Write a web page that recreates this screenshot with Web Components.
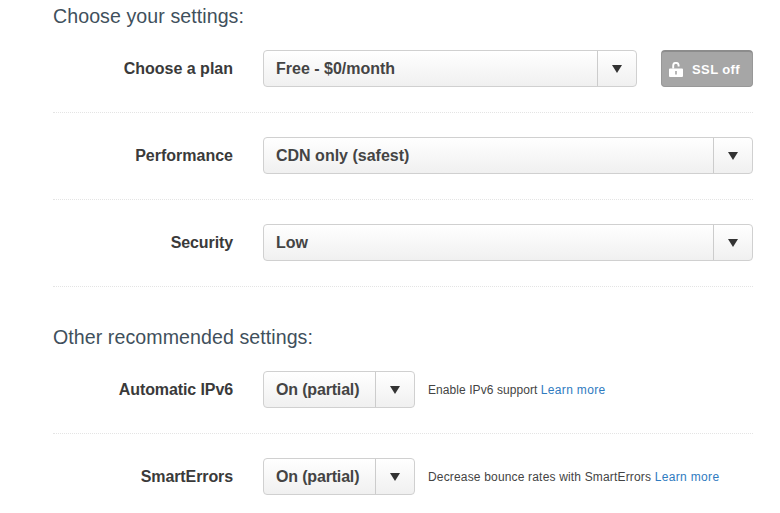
<!DOCTYPE html>
<html>
<head>
<meta charset="utf-8">
<style>
  html, body { margin: 0; background: #fff; }
  body { font-family: "Liberation Sans", Arial, sans-serif; color: #333; }
</style>
</head>
<body>
<settings-page>
  <settings-section heading="Choose your settings:" class="first">
    <setting-row label="Choose a plan">
      <drop-select value="Free - $0/month" style="flex:0 0 374px"></drop-select>
      <ssl-badge>SSL off</ssl-badge>
    </setting-row>
    <setting-row label="Performance">
      <drop-select value="CDN only (safest)" style="flex:1"></drop-select>
    </setting-row>
    <setting-row label="Security" style="--label-spacing:-0.1px">
      <drop-select value="Low" style="flex:1"></drop-select>
    </setting-row>
  </settings-section>
  <settings-section heading="Other recommended settings:" class="second">
    <setting-row label="Automatic IPv6" style="--label-spacing:-0.1px">
      <drop-select value="On (partial)" style="flex:0 0 152px;--value-spacing:-0.17px"></drop-select>
      <span class="hint" style="letter-spacing:0.07px">Enable IPv6 support <a>Learn more</a></span>
    </setting-row>
    <setting-row label="SmartErrors" style="--label-spacing:-0.1px" last>
      <drop-select value="On (partial)" style="flex:0 0 152px;--value-spacing:-0.17px"></drop-select>
      <span class="hint">Decrease bounce rates with SmartErrors <a>Learn more</a></span>
    </setting-row>
  </settings-section>
</settings-page>

<script>
class SettingsPage extends HTMLElement {
  constructor() {
    super();
    this.attachShadow({ mode: 'open' });
    this.shadowRoot.innerHTML = `
      <style>
        :host { display: block; padding: 0 27px 0 53px; }
      </style>
      <slot></slot>
    `;
  }
}

class SettingsSection extends HTMLElement {
  constructor() {
    super();
    this.attachShadow({ mode: 'open' });
  }

  connectedCallback() {
    const first = this.classList.contains('first');
    this.shadowRoot.innerHTML = `
      <style>
        :host { display: block; padding-top: ${first ? 3 : 0}px; padding-bottom: ${first ? 13 : 0}px; }
        h2 {
          margin: 0 0 21px;
          font-size: 19.6px;
          letter-spacing: 0.07px;
          line-height: 26px;
          font-weight: normal;
          color: #3f505c;
        }
      </style>
      <h2>${this.getAttribute('heading')}</h2>
      <slot></slot>
    `;
  }
}

class SettingRow extends HTMLElement {
  constructor() {
    super();
    this.attachShadow({ mode: 'open' });
  }

  connectedCallback() {
    this.shadowRoot.innerHTML = `
      <style>
        :host {
          display: flex;
          align-items: flex-start;
          height: 62px;
          margin-bottom: 24px;
          border-bottom: 1px dotted #e4e4e4;
        }
        :host([last]) {
          height: 37px;
          margin-bottom: 0;
          border-bottom: none;
        }
        .label {
          flex: 0 0 180px;
          margin-right: 30px;
          text-align: right;
          font-size: 16px;
          font-weight: bold;
          letter-spacing: var(--label-spacing, 0);
          line-height: 37px;
          color: #3a3a3a;
        }
        .body {
          flex: 1;
          display: flex;
          align-items: center;
          height: 37px;
          font-size: 12px;
          color: #444;
        }
        ::slotted(.hint) { margin-left: 13px; }
        ::slotted(ssl-badge) { margin-left: 24px; }
      </style>
      <div class="label">${this.getAttribute('label')}</div>
      <div class="body"><slot></slot></div>
    `;
  }
}

class DropSelect extends HTMLElement {
  constructor() {
    super();
    this.attachShadow({ mode: 'open' });
  }

  connectedCallback() {
    this.shadowRoot.innerHTML = `
      <style>
        :host { display: block; min-width: 0; }
        .box {
          box-sizing: border-box;
          height: 37px;
          display: flex;
          border: 1px solid #d0d0d0;
          border-radius: 4px;
          background: linear-gradient(#fff, #f0f0f0);
        }
        .value {
          flex: 1;
          padding-left: 12px;
          font-size: 16px;
          font-weight: bold;
          letter-spacing: var(--value-spacing, 0);
          line-height: 35px;
          color: #444;
          white-space: nowrap;
        }
        .arrow {
          flex: 0 0 38px;
          display: flex;
          align-items: center;
          justify-content: center;
          border-left: 1px solid #ccc;
        }
      </style>
      <div class="box">
        <div class="value">${this.getAttribute('value')}</div>
        <div class="arrow">
          <svg width="10" height="8" viewBox="0 0 10 8"><path d="M0 0h10L5 8z" fill="#333"/></svg>
        </div>
      </div>
    `;
  }
}

class SslBadge extends HTMLElement {
  constructor() {
    super();
    this.attachShadow({ mode: 'open' });
    this.shadowRoot.innerHTML = `
      <style>
        :host {
          box-sizing: border-box;
          flex: 0 0 92px;
          height: 37px;
          display: flex;
          align-items: center;
          gap: 9px;
          padding-left: 7px;
          border: 1px solid #989898;
          border-top: 2px solid #8c8c8c;
          border-radius: 4px;
          background: #a6a6a6;
          color: #fff;
          font-size: 13px;
          letter-spacing: 0.4px;
          font-weight: bold;
        }
      </style>
      <svg width="14" height="15" viewBox="0 0 14 15">
        <path d="M4.2 6.5V3.6a2.7 2.7 0 0 1 5.4 0v.9" fill="none" stroke="#fff" stroke-width="1.9"/>
        <path d="M1 6.5h12a1 1 0 0 1 1 1V14a1 1 0 0 1-1 1H1a1 1 0 0 1-1-1V7.500a1 1 0 0 1 1-1z" fill="#fff"/>
        <path d="M6.200 9h1.600v3.500H6.200z" fill="#a6a6a6"/>
      </svg>
      <slot></slot>
    `;
  }
}

customElements.define('settings-page', SettingsPage);
customElements.define('settings-section', SettingsSection);
customElements.define('setting-row', SettingRow);
customElements.define('drop-select', DropSelect);
customElements.define('ssl-badge', SslBadge);
</script>
<style>
  .hint { font-size: 12px; letter-spacing: 0.17px; color: #444; }
  .hint a { color: #2f7bbf; letter-spacing: 0.33px; }
</style>
</body>
</html>
